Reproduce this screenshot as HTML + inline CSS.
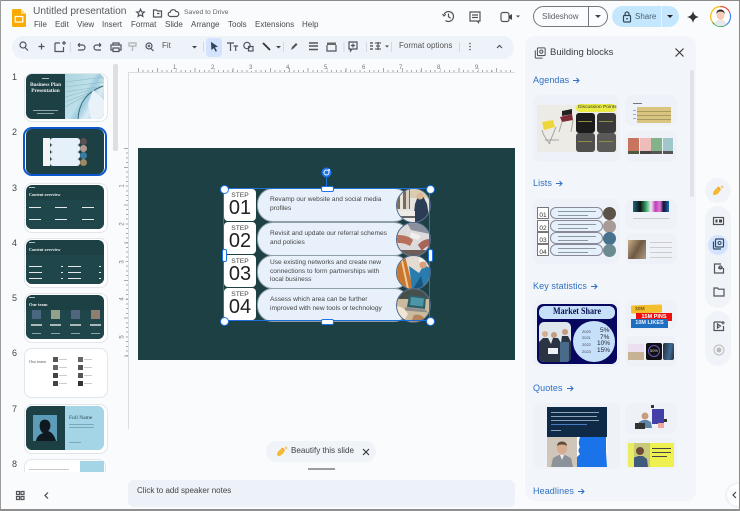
<!DOCTYPE html>
<html><head><meta charset="utf-8"><style>
html,body{margin:0;padding:0;background:#f9fbfd}
body{width:740px;height:511px;position:relative;overflow:hidden;background:#f9fbfd;font-family:"Liberation Sans","Noto Sans CJK SC",sans-serif;color:#444746;filter:blur(.3px)}
.a,.a *{box-sizing:border-box}
.a{position:absolute}
.t{position:absolute;white-space:nowrap;line-height:1}
svg{position:absolute;overflow:visible}
.i{fill:none;stroke:#50545a;stroke-width:1.2}
.card{position:absolute;left:24px;width:82px;background:#fff;border:1px solid #e1e5ec;border-radius:8px}
.img{position:absolute;left:26px;width:78px;border-radius:6px;overflow:hidden;background:#1c4043}
.n{position:absolute;left:12px;font-size:9px;color:#444746;line-height:1}
.w{position:absolute;background:#e5eaea;height:1px}
.tb{position:absolute;border-radius:8px;background:#eef2f8}
.h{position:absolute;left:533px;font-size:9px;letter-spacing:.1px;color:#2f6fc4;line-height:1;white-space:nowrap}
.h svg{position:relative;display:inline-block;margin-left:4px;top:0;vertical-align:-1px}
.step{position:absolute;left:224px;width:32px;height:32px;background:#fff;border-radius:4px;text-align:center;color:#222}
.step b{display:block;font-weight:400;font-size:6.700px;line-height:7px;margin-top:3px;color:#444}
.step i{display:block;font-style:normal;font-size:20px;line-height:19px}
.pill{position:absolute;left:257px;width:139px;height:32px;background:#e8f1fb;border-radius:16px;font-size:6.600px;line-height:8.800px;color:#444;padding-left:12px;display:flex;align-items:center;border:1px solid #8fa0a8}
.circ{position:absolute;left:396px;width:33px;height:33px;border-radius:50%;overflow:hidden;border:1px solid #4f6a8c}
.circ svg{left:0;top:0}
.hd{position:absolute;width:7px;height:7px;border-radius:50%;background:#fff;border:1px solid #1a73e8}
.hb{position:absolute;background:#fff;border:1px solid #1a73e8;border-radius:2px}
.mp{position:absolute;left:13px;top:0;width:53px;height:12px;border:.5px solid #889;border-radius:6px;background:linear-gradient(#8a96a0,#8a96a0) 7px 3px/38px 1px no-repeat,linear-gradient(#8a96a0,#8a96a0) 7px 7px/30px 1px no-repeat,#e6f0fb}
.mb{position:absolute;left:0;top:0;width:12px;height:12px;background:#fff;border:.5px solid #777;text-align:center;font-size:6.500px;line-height:15px;color:#333}
.mc{position:absolute;left:66px;top:0;width:13px;height:13px;border-radius:50%}
</style></head><body>

<!-- Top bar -->
<svg style="left:12px;top:9px" width="14" height="18" viewBox="0 0 14 18"><path d="M1.500 0H9l5 5v11.500a1.500 1.500 0 0 1-1.500 1.500h-11A1.500 1.500 0 0 1 0 16.500V1.500A1.500 1.500 0 0 1 1.500 0z" fill="#f9ab00"/><path d="M9 0l5 5H9z" fill="#fbd67a"/><rect x="3.200" y="7.500" width="7.600" height="5.500" fill="none" stroke="#fff" stroke-width="1.200"/></svg>
<div class="t" style="left:33px;top:7px;font-size:10.200px;color:#5a5d60">Untitled presentation</div>
<svg style="left:136px;top:7px" width="68" height="12" viewBox="0 0 68 12"><path class="i" d="M4.500 2.300l1.100 2.500 2.700.2-2 1.800.6 2.600-2.400-1.400-2.400 1.400.6-2.600-2-1.800 2.700-.2z"/><path class="i" d="M17.500 3h3l1 1h4v6h-8z"/><path class="i" d="M21 6.500h2.500M38 9.500h-3.500a2.200 2.200 0 0 1-.2-4.400 3 3 0 0 1 5.700-.6 2.500 2.500 0 0 1 .5 5z"/></svg>
<div class="t" style="left:184px;top:10px;font-size:6.800px;color:#666">Saved to Drive</div>
<div class="t" style="left:34px;top:21px;font-size:8px;color:#484b4e">File</div>
<div class="t" style="left:55px;top:21px;font-size:8px;color:#484b4e">Edit</div>
<div class="t" style="left:77px;top:21px;font-size:8px;color:#484b4e">View</div>
<div class="t" style="left:102px;top:21px;font-size:8px;color:#484b4e">Insert</div>
<div class="t" style="left:131px;top:21px;font-size:8px;color:#484b4e">Format</div>
<div class="t" style="left:165px;top:21px;font-size:8px;color:#484b4e">Slide</div>
<div class="t" style="left:191px;top:21px;font-size:8px;color:#484b4e">Arrange</div>
<div class="t" style="left:228px;top:21px;font-size:8px;color:#484b4e">Tools</div>
<div class="t" style="left:255px;top:21px;font-size:8px;color:#484b4e">Extensions</div>
<div class="t" style="left:302px;top:21px;font-size:8px;color:#484b4e">Help</div>

<!-- right top icons -->
<svg style="left:442px;top:9px" width="120" height="16" viewBox="0 0 120 16"><circle cx="6.500" cy="7.500" r="5" class="i" stroke-dasharray="24 8" transform="rotate(-150 6.500 7.500)"/><path class="i" d="M6.500 4.500v3.300l2.200 1.300M.5 5l1.500 2 1.700-1.700"/><path class="i" d="M28 3h10v9h-1.500v1.500L35 12h-7z"/><path class="i" d="M30 6h6M30 8.500h6"/><rect x="59" y="3.500" width="8" height="9" rx="2" class="i" stroke-width="1.500"/><path d="M67 7l3-2v6l-3-2z" fill="#444"/><path d="M74 6.500h4l-2 2z" fill="#444"/></svg>
<div class="a" style="left:533px;top:6px;width:75px;height:21px;border:1px solid #777;border-radius:11px;background:#fafcff"></div>
<div class="a" style="left:588px;top:6px;width:1px;height:21px;background:#777"></div>
<div class="t" style="left:542px;top:13px;font-size:8px;color:#5a5f62">Slideshow</div>
<svg style="left:595px;top:15px" width="6" height="4"><path d="M0 0h6L3 3z" fill="#444"/></svg>
<div class="a" style="left:612px;top:6px;width:67px;height:21px;border-radius:11px;background:#c5e7fd"></div>
<div class="a" style="left:661px;top:6px;width:1px;height:21px;background:#e5f3fd"></div>
<svg style="left:622px;top:11px" width="10" height="12" viewBox="0 0 10 12"><rect x="1.500" y="4.500" width="7" height="6.500" rx="1" fill="none" stroke="#33475b" stroke-width="1.200"/><path d="M3 4.500V3a2 2 0 0 1 4 0v1.500" fill="none" stroke="#33475b" stroke-width="1.200"/><circle cx="5" cy="7.800" r=".9" fill="#33475b"/></svg>
<div class="t" style="left:635px;top:13px;font-size:8px;color:#4a6275">Share</div>
<svg style="left:667px;top:15px" width="6" height="4"><path d="M0 0h6L3 3z" fill="#222"/></svg>
<svg style="left:686px;top:10px" width="14" height="14" viewBox="0 0 14 14"><path d="M7 1c.8 3.500 2 5 6 6-4 1-5.200 2.500-6 6-.8-3.500-2-5-6-6 4-1 5.200-2.500 6-6z" fill="#333"/></svg>
<svg style="left:709px;top:5px" width="23" height="23" viewBox="0 0 23 23"><circle cx="11.500" cy="11.500" r="10" fill="#fff"/><path d="M11.500 1.500a10 10 0 0 1 8.700 5" fill="none" stroke="#ea4335" stroke-width="1.200"/><path d="M20.200 6.500a10 10 0 0 1-3.700 13.700" fill="none" stroke="#4285f4" stroke-width="1.200"/><path d="M16.500 20.200a10 10 0 0 1-13-3" fill="none" stroke="#34a853" stroke-width="1.200"/><path d="M3.500 17.200a10 10 0 0 1 8-15.700" fill="none" stroke="#fbbc04" stroke-width="1.200"/><ellipse cx="11.500" cy="10" rx="4" ry="5" fill="#f3cdb8"/><path d="M7.300 9c0-6 8.400-6 8.400 0-1-2-2-2.500-4.200-2.500S8.300 7 7.300 9z" fill="#2a2320"/><path d="M5.500 19c1-3.500 3.500-4 6-4s5 .5 6 4a9 9 0 0 1-12 0z" fill="#e8e8ea"/></svg>

<!-- Toolbar -->
<div class="a" style="left:12px;top:36px;width:502px;height:23px;background:#eef2f9;border-radius:12px"></div>
<div class="a" style="left:206px;top:38px;width:16px;height:19px;background:#d3e3fd;border-radius:4px"></div>
<svg style="left:0;top:36px" width="520" height="23" viewBox="0 0 520 23">
<circle cx="23" cy="9" r="3" class="i"/><path class="i" d="M25 11.500l3 3"/>
<path class="i" stroke-width="1.300" d="M41.500 7.500v6M38.500 10.500h6"/>
<path class="i" d="M55 7h5M55 7v8.500h8.500V11M64 5v4M62 7h4"/>
<path d="M70.500 6v10" stroke="#d5dae1"/>
<path class="i" d="M78 9h4.500a2.500 2.500 0 0 1 0 5H78M78 9l1.800-1.800M78 9l1.800 1.800"/>
<path class="i" d="M101 9h-4.500a2.500 2.500 0 0 0 0 5H101M101 9l-1.800-1.800M101 9l-1.800 1.800"/>
<path class="i" d="M113 9h-2v5h2M119 9h2v5h-2M113 7h6v2h-6zM113 12h6v3.500h-6zM111 9h10"/>
<path d="M129 7h7v3h-7zM132.500 10v5" stroke="#b5bbc0" fill="none" stroke-width="1.400"/>
<circle cx="149" cy="10" r="3" class="i"/><path class="i" d="M151 12.500l2.500 2.500M147.700 10h2.600M149 8.700v2.600"/>
<path d="M192 10h5l-2.500 2.500z" fill="#444"/>
<path d="M203.500 6v10" stroke="#d5dae1"/>
<path d="M211 5.800l7 5-3 .6 2 3.600-1.300.7-2-3.600-2.300 2z" fill="#30425c"/>
<path class="i" d="M227 7h7M230.500 7v8M233.500 10h4.500M235.700 10v5"/>
<circle cx="247" cy="9.500" r="3.200" class="i"/><rect x="248.500" y="10.500" width="4.500" height="4.500" class="i"/>
<path d="M263 7l7 7" stroke="#333" stroke-width="1.800"/><path d="M276 10h5l-2.500 2.500z" fill="#444"/>
<path d="M283.500 6v10" stroke="#d5dae1"/>
<path d="M291 14l1-3 4-4 1.500 1.500-4 4z" fill="#555"/>
<path d="M309 7h9M309 10h9M309 13.500h9" stroke="#555" stroke-width="1.400"/>
<path d="M327 6.500h9v2.500h-9z" fill="#666"/><path class="i" d="M327 9v6h9V9" stroke-width=".8"/>
<path d="M344 6v10" stroke="#d5dae1"/>
<path class="i" d="M349 6h8v7h-5l-1.500 2v-2H349zM353 7.500v4M351 9.500h4"/>
<path d="M366.500 6v10" stroke="#d5dae1"/>
<path d="M370 7h3M370 10h3M370 13h3" stroke="#444" stroke-width="1.300"/><path d="M375 7h6M376 10h4M375 13h6M378 6v8" stroke="#444" stroke-width="1"/>
<path d="M385 9.500h4l-2 2z" fill="#444"/>
<path d="M391.500 6v10" stroke="#d5dae1"/>
<path d="M459.500 6v10" stroke="#d5dae1"/>
<circle cx="470" cy="7.500" r=".8" fill="#555"/><circle cx="470" cy="10.500" r=".8" fill="#555"/><circle cx="470" cy="13.500" r=".8" fill="#555"/>
<path class="i" d="M497 12l2.500-2.500 2.500 2.500"/>
</svg>
<div class="t" style="left:162px;top:42px;font-size:8px;color:#555">Fit</div>
<div class="t" style="left:399px;top:42px;font-size:8px;color:#555">Format options</div>

<!-- Left filmstrip -->
<div class="n" style="top:73px">1</div><div class="n" style="top:128px">2</div><div class="n" style="top:184px">3</div><div class="n" style="top:239px">4</div><div class="n" style="top:294px">5</div><div class="n" style="top:349px">6</div><div class="n" style="top:405px">7</div><div class="n" style="top:460px">8</div>
<div class="a" style="left:113px;top:64px;width:5px;height:87px;background:#dcdfe3;border-radius:2px"></div>

<div class="card" style="top:73px;height:47px"></div>
<div class="img" style="top:74px;height:45px">
  <div class="a" style="left:39px;top:0;width:39px;height:45px;background:linear-gradient(120deg,#a9d2de 0%,#bfe0ea 45%,#9ccbe0 55%,#dcecf4 70%,#8fc3e4 100%)"></div>
  <svg style="left:39px;top:0" width="39" height="45"><path d="M0 8L39 3M0 13L39 8M0 18L39 12M0 23L32 14M0 28L26 18M0 33L20 22" stroke="#8ab8c2" stroke-width=".6"/><path d="M13 45C14 28 22 18 38 12" stroke="#3c6a75" fill="none"/><path d="M26 45L23 30 28 16 39 26V45z" fill="#e8f2f8"/></svg>
  <div class="w" style="left:16px;top:4px;width:7px;background:#aebcbc"></div>
  <div class="t" style="left:0;width:39px;text-align:center;top:9px;font:700 5.300px/5.500px 'Liberation Serif',serif;color:#eee;white-space:normal">Business Plan Presentation</div>
  <div class="w" style="left:7px;top:36px;width:25px;background:#8fa5a5"></div><div class="w" style="left:11px;top:39px;width:17px;background:#8fa5a5"></div>
</div>

<div class="a" style="left:23px;top:127px;width:84px;height:49px;border:2px solid #0b57d0;border-radius:9px;background:#fff"></div>
<div class="img" style="top:129px;height:45px">
  <div class="a" style="left:17px;top:9px;width:7px;height:28px;background:#f4f4f4"></div>
  <div class="a" style="left:24px;top:9px;width:30px;height:7px;background:#e6f0fb;border-radius:3px"></div><div class="a" style="left:24px;top:16px;width:30px;height:7px;background:#e6f0fb;border-radius:3px"></div><div class="a" style="left:24px;top:23px;width:30px;height:7px;background:#e6f0fb;border-radius:3px"></div><div class="a" style="left:24px;top:30px;width:30px;height:7px;background:#e6f0fb;border-radius:3px"></div>
  <div class="a" style="left:54px;top:9px;width:7px;height:7px;border-radius:50%;background:#5d5050"></div><div class="a" style="left:54px;top:16px;width:7px;height:7px;border-radius:50%;background:#b39a92"></div><div class="a" style="left:54px;top:23px;width:7px;height:7px;border-radius:50%;background:#3b7ca3"></div><div class="a" style="left:54px;top:30px;width:7px;height:7px;border-radius:50%;background:#a08761"></div>
</div>

<div class="card" style="top:183px;height:48px"></div>
<div class="img" style="top:185px;height:44px">
  <div class="a" style="left:0;top:15px;width:78px;height:29px;background:#1f464a"></div>
  <div class="w" style="left:3px;top:2px;width:6px;background:#aebcbc"></div>
  <div class="t" style="left:3px;top:8px;font:700 4.200px/1 'Liberation Serif',serif;color:#eee">Content overview</div>
  <div class="w" style="left:3px;top:22px;width:12px"></div><div class="w" style="left:29px;top:22px;width:12px"></div><div class="w" style="left:56px;top:22px;width:12px"></div>
  <div class="w" style="left:3px;top:34px;width:12px"></div><div class="w" style="left:29px;top:34px;width:12px"></div><div class="w" style="left:56px;top:34px;width:12px"></div>
</div>

<div class="card" style="top:238px;height:48px"></div>
<div class="img" style="top:240px;height:44px">
  <div class="a" style="left:0;top:15px;width:78px;height:29px;background:#1f464a"></div>
  <div class="w" style="left:3px;top:2px;width:6px;background:#aebcbc"></div>
  <div class="t" style="left:3px;top:8px;font:700 4.200px/1 'Liberation Serif',serif;color:#eee">Content overview</div>
  <div class="w" style="left:3px;top:26px;width:13px"></div><div class="w" style="left:42px;top:26px;width:13px"></div><div class="w" style="left:35px;top:26px;width:2px"></div><div class="w" style="left:73px;top:26px;width:2px"></div>
  <div class="w" style="left:3px;top:32px;width:13px"></div><div class="w" style="left:42px;top:32px;width:13px"></div><div class="w" style="left:35px;top:32px;width:2px"></div><div class="w" style="left:73px;top:32px;width:2px"></div>
  <div class="w" style="left:3px;top:38px;width:13px"></div><div class="w" style="left:42px;top:38px;width:13px"></div><div class="w" style="left:35px;top:38px;width:2px"></div><div class="w" style="left:73px;top:38px;width:2px"></div>
</div>

<div class="card" style="top:293px;height:48px"></div>
<div class="img" style="top:295px;height:44px">
  <div class="a" style="left:0;top:15px;width:78px;height:29px;background:#1f464a"></div>
  <div class="w" style="left:3px;top:2px;width:6px;background:#aebcbc"></div>
  <div class="t" style="left:3px;top:8px;font:700 4.500px/1 'Liberation Serif',serif;color:#eee">Our team</div>
  <div class="a" style="left:6px;top:15px;width:9px;height:9px;background:#4b6680"></div><div class="a" style="left:25px;top:15px;width:9px;height:9px;background:#93a08a"></div><div class="a" style="left:45px;top:15px;width:9px;height:9px;background:#52657f"></div><div class="a" style="left:65px;top:15px;width:9px;height:9px;background:#8f7d70"></div>
  <div class="w" style="left:5px;top:29px;width:11px;height:2px;background:#aab8b8"></div><div class="w" style="left:24px;top:29px;width:11px;height:2px;background:#aab8b8"></div><div class="w" style="left:44px;top:29px;width:11px;height:2px;background:#aab8b8"></div><div class="w" style="left:64px;top:29px;width:11px;height:2px;background:#aab8b8"></div>
  <div class="w" style="left:6px;top:38px;width:9px;background:#8fa5a5"></div><div class="w" style="left:25px;top:38px;width:9px;background:#8fa5a5"></div><div class="w" style="left:45px;top:38px;width:9px;background:#8fa5a5"></div><div class="w" style="left:65px;top:38px;width:9px;background:#8fa5a5"></div>
</div>

<div class="card" style="top:348px;height:48px"></div>
<div class="img" style="top:350px;height:44px;background:#fff">
  <div class="t" style="left:3px;top:10px;font:4.500px/1 'Liberation Serif',serif;color:#555">Our team</div>
  <div class="a" style="left:27px;top:7px;width:5px;height:5px;background:#555"></div><div class="a" style="left:27px;top:15px;width:5px;height:5px;background:#666"></div><div class="a" style="left:27px;top:23px;width:5px;height:5px;background:#444"></div><div class="a" style="left:27px;top:31px;width:5px;height:5px;background:#444"></div>
  <div class="a" style="left:52px;top:7px;width:5px;height:5px;background:#666"></div><div class="a" style="left:52px;top:15px;width:5px;height:5px;background:#555"></div><div class="a" style="left:52px;top:23px;width:5px;height:5px;background:#555"></div><div class="a" style="left:52px;top:31px;width:5px;height:5px;background:#333"></div>
  <div class="w" style="left:33px;top:9px;width:8px;background:#ccc"></div><div class="w" style="left:33px;top:17px;width:8px;background:#ccc"></div><div class="w" style="left:33px;top:25px;width:8px;background:#ccc"></div><div class="w" style="left:33px;top:33px;width:8px;background:#ccc"></div>
  <div class="w" style="left:58px;top:9px;width:8px;background:#ccc"></div><div class="w" style="left:58px;top:17px;width:8px;background:#ccc"></div><div class="w" style="left:58px;top:25px;width:8px;background:#ccc"></div><div class="w" style="left:58px;top:33px;width:8px;background:#ccc"></div>
</div>

<div class="card" style="top:404px;height:48px"></div>
<div class="img" style="top:406px;height:44px;background:#a3d5e6">
  <div class="a" style="left:0;top:0;width:39px;height:44px;background:#1c4043"></div>
  <div class="a" style="left:7px;top:9px;width:24px;height:26px;background:#5c9cb8"></div>
  <svg style="left:7px;top:9px" width="24" height="26"><path d="M3 26c1-6 5-7 7-8-3-2-4-6-3-10 1-4 8-5 10 0 1 3 0 7-2 8 3 1 6 3 8 10z" fill="#101820"/></svg>
  <div class="t" style="left:43px;top:10px;font:5.500px/1 'Liberation Serif',serif;color:#2b4a55">Full Name</div>
  <div class="w" style="left:43px;top:18px;width:25px;background:#7ba8b8"></div><div class="w" style="left:43px;top:21px;width:25px;background:#7ba8b8"></div><div class="w" style="left:43px;top:36px;width:12px;background:#7ba8b8"></div>
</div>

<div class="a" style="left:24px;top:459px;width:82px;height:13px;background:#fff;border:1px solid #e1e5ec;border-bottom:none;border-radius:8px 8px 0 0"></div>
<div class="a" style="left:80px;top:461px;width:24px;height:11px;background:#a3d5e6"></div>
<div class="w" style="left:29px;top:469px;width:40px;background:#ccc"></div>

<svg style="left:16px;top:491px" width="34" height="10" viewBox="0 0 34 10"><path class="i" d="M.5.500h3v3h-3zM5 .5h3v3H5zM.5 5.500h3v3h-3zM5 5.500h3v3H5z"/><path d="M32 1.500l-3 3 3 3" fill="none" stroke="#444" stroke-width="1.200"/></svg>

<!-- Rulers and canvas -->
<div class="a" style="left:128px;top:72px;width:387px;height:1px;background:#dadde1"></div>
<div class="a" style="left:128px;top:72px;width:1px;height:357px;background:#dadde1"></div>
<div class="a" style="left:138px;top:70px;width:377px;height:2px;background:repeating-linear-gradient(90deg,#a5aaaf 0,#a5aaaf 1px,transparent 1px,transparent 4.710px)"></div>
<div class="a" style="left:138px;top:68px;width:377px;height:4px;background:repeating-linear-gradient(90deg,#a5aaaf 0,#a5aaaf 1px,transparent 1px,transparent 18.850px)"></div>
<div class="a" style="left:126px;top:148px;width:2px;height:212px;background:repeating-linear-gradient(180deg,#a5aaaf 0,#a5aaaf 1px,transparent 1px,transparent 4.710px)"></div>
<div class="a" style="left:124px;top:148px;width:4px;height:212px;background:repeating-linear-gradient(180deg,#a5aaaf 0,#a5aaaf 1px,transparent 1px,transparent 18.850px)"></div>
<div class="t" style="left:173px;top:65px;font-size:6px;color:#777;background:#f9fbfd">1</div><div class="t" style="left:211px;top:65px;font-size:6px;color:#777;background:#f9fbfd">2</div><div class="t" style="left:249px;top:65px;font-size:6px;color:#777;background:#f9fbfd">3</div><div class="t" style="left:286px;top:65px;font-size:6px;color:#777;background:#f9fbfd">4</div><div class="t" style="left:324px;top:65px;font-size:6px;color:#777;background:#f9fbfd">5</div><div class="t" style="left:362px;top:65px;font-size:6px;color:#777;background:#f9fbfd">6</div><div class="t" style="left:399px;top:65px;font-size:6px;color:#777;background:#f9fbfd">7</div><div class="t" style="left:437px;top:65px;font-size:6px;color:#777;background:#f9fbfd">8</div><div class="t" style="left:475px;top:65px;font-size:6px;color:#777;background:#f9fbfd">9</div>
<div class="t" style="left:121px;top:183px;font-size:6px;color:#777;background:#f9fbfd;transform:rotate(-90deg)">1</div><div class="t" style="left:121px;top:221px;font-size:6px;color:#777;background:#f9fbfd;transform:rotate(-90deg)">2</div><div class="t" style="left:121px;top:259px;font-size:6px;color:#777;background:#f9fbfd;transform:rotate(-90deg)">3</div><div class="t" style="left:121px;top:296px;font-size:6px;color:#777;background:#f9fbfd;transform:rotate(-90deg)">4</div><div class="t" style="left:121px;top:334px;font-size:6px;color:#777;background:#f9fbfd;transform:rotate(-90deg)">5</div>

<div class="a" style="left:138px;top:148px;width:377px;height:212px;background:#1c4043"></div>

<div class="step" style="top:189px"><b>STEP</b><i>01</i></div>
<div class="step" style="top:222px"><b>STEP</b><i>02</i></div>
<div class="step" style="top:255px"><b>STEP</b><i>03</i></div>
<div class="step" style="top:288px"><b>STEP</b><i>04</i></div>
<div class="pill" style="top:188px"><span>Revamp our website and social media<br>profiles</span></div>
<div class="pill" style="top:222px"><span>Revisit and update our referral schemes<br>and policies</span></div>
<div class="pill" style="top:255px"><span>Use existing networks and create new<br>connections to form partnerships with<br>local business</span></div>
<div class="pill" style="top:288px"><span>Assess which area can be further<br>improved with new tools or technology</span></div>

<div class="circ" style="top:188px;background:#e6e4df"><svg width="33" height="33"><rect width="13" height="20" fill="#7a6a5a"/><rect x="3" width="3" height="20" fill="#e8e4da"/><rect x="9" width="3" height="20" fill="#d8d2c6"/><rect x="13" width="20" height="9" fill="#d9cdb0"/><path d="M16 33l2-18 3-8h5l4 8 3 18z" fill="#2b3d55"/><circle cx="23" cy="7" r="3.500" fill="#dcb89a"/><rect y="22" width="18" height="11" fill="#efece8"/><path d="M0 28h18" stroke="#666" stroke-width="2"/></svg></div>
<div class="circ" style="top:222px;background:#dcdadb"><svg width="33" height="33"><path d="M10 0h23v11L14 7z" fill="#8a909c"/><path d="M0 12c6 0 12 1 16 5l-3 6C8 20 4 20 0 20z" fill="#b7705c"/><path d="M33 16c-5 0-9 2-12 6l4 6c2-3 5-5 8-5z" fill="#a6675a"/><path d="M0 27h33v6H0z" fill="#6d5d58"/><path d="M14 9l10 4-3 4-8-3z" fill="#f2f0ee"/></svg></div>
<div class="circ" style="top:255px;background:#e4dcd0"><svg width="33" height="33"><path d="M0 0h8l8 33H0z" fill="#c9772f"/><path d="M3 0h2l7 33h-2z" fill="#f0c89a"/><path d="M12 10l10 7 5-8 6 3v12l-8 9H15z" fill="#2a7cae"/><circle cx="26" cy="9" r="3.500" fill="#d7a27a"/><path d="M22 0h11v5l-11 1z" fill="#f4f2ee"/><path d="M16 33l8-13 3 13z" fill="#17567f"/></svg></div>
<div class="circ" style="top:288px;background:#cdbb9d"><svg width="33" height="33"><rect width="33" height="10" fill="#45504c"/><path d="M12 6l17 2-1 12-18-2z" fill="#2f5f68"/><path d="M14 8l13 1.500-1 8-13-1.500z" fill="#4b97a6"/><path d="M8 18l20 2.500 3 3-23-2z" fill="#8d8d8d"/><path d="M0 17c5 1 8 3 11 8l-5 8H0z" fill="#efe6d6"/><path d="M17 26c4-1 8 0 10 3l-2 4H14z" fill="#b5835d"/></svg></div>

<div class="a" style="left:223px;top:188px;width:207px;height:133px;border:1.200px solid #1f6fd8"></div>
<div class="a" style="left:326px;top:176px;width:1px;height:12px;background:#1a73e8"></div>
<div class="hd" style="left:220px;top:185px"></div><div class="hd" style="left:426px;top:185px"></div><div class="hd" style="left:220px;top:317px"></div><div class="hd" style="left:426px;top:317px"></div>
<div class="hb" style="left:321px;top:186px;width:11px;height:4px"></div><div class="hb" style="left:321px;top:319px;width:11px;height:4px"></div>
<div class="hb" style="left:222px;top:249px;width:3px;height:11px"></div><div class="hb" style="left:428px;top:249px;width:3px;height:11px"></div>
<svg style="left:321px;top:167px" width="11" height="11" viewBox="0 0 11 11"><circle cx="5.500" cy="5.500" r="5" fill="#1a73e8"/><circle cx="5.500" cy="5.500" r="2.500" fill="none" stroke="#fff"/><path d="M7 2.500h1.500V4.300" stroke="#fff" fill="none" stroke-width=".8"/></svg>

<!-- Beautify & notes -->
<div class="a" style="left:266px;top:441px;width:110px;height:21px;background:#f0f4f9;border-radius:11px"></div>
<svg style="left:276px;top:445px" width="13" height="13" viewBox="0 0 13 13"><path d="M1 10c0-3 2.500-5 4-6l3 3c-1 2-4 4.500-6 4z" fill="#f5b92e"/><path d="M5 3.500l1.500-1 2.500 3-1 1.200z" fill="#ef9c1d"/><path d="M10 1l.5 1.500L12 3l-1.500.5L10 5l-.5-1.500L8 3l1.500-.5z" fill="#f5b92e"/></svg>
<div class="t" style="left:291px;top:447px;font-size:8.100px;color:#3f4347">Beautify this slide</div>
<svg style="left:362px;top:448px" width="8" height="8"><path d="M1 1l6 6M7 1L1 7" stroke="#333" stroke-width="1.100"/></svg>
<div class="a" style="left:308px;top:468px;width:27px;height:2px;background:#9a9ea3"></div>
<div class="a" style="left:128px;top:480px;width:387px;height:27px;background:#edf1f8;border-radius:6px"></div>
<div class="t" style="left:137px;top:487px;font-size:8px;color:#444">Click to add speaker notes</div>

<!-- Building blocks -->
<div class="a" style="left:525px;top:36px;width:171px;height:465px;background:#f2f5fa;border-radius:10px"></div>
<svg style="left:534px;top:47px" width="12" height="12" viewBox="0 0 14 14"><rect x="4" y="1" width="9" height="9" rx="1" class="i"/><circle cx="8.500" cy="5.500" r="1.800" class="i"/><path class="i" d="M1.500 4v8a1 1 0 0 0 1 1H10"/></svg>
<div class="t" style="left:550px;top:48px;font-size:9.500px;color:#3c4043">Building blocks</div>
<svg style="left:675px;top:48px" width="9" height="9"><path d="M.5.500l8 8M8.500.5l-8 8" stroke="#333" stroke-width="1.100"/></svg>
<div class="a" style="left:690px;top:70px;width:4px;height:127px;background:#dfe2e6;border-radius:2px"></div>

<div class="h" style="top:76px">Agendas<svg width="7" height="7" viewBox="0 0 7 7"><path d="M0 3.500h6M3.500 1l2.500 2.500L3.500 6" fill="none" stroke="#2f6fc4" stroke-width="1"/></svg></div>
<div class="tb" style="left:533px;top:95px;width:87px;height:67px"></div>
<div class="tb" style="left:625px;top:95px;width:52px;height:31px"></div>
<div class="tb" style="left:625px;top:131px;width:52px;height:31px"></div>
<div class="a" style="left:537px;top:105px;width:80px;height:47px;background:#ecebe6"></div>
<svg style="left:537px;top:108px" width="40" height="44"><path d="M5 14l11-2 2 7-11 3z" fill="#ecd63a"/><path d="M23 9l12-3 1 6-11 2z" fill="#7e2c36"/><path d="M25 3l10-2 0 5-10 2z" fill="#222"/><path d="M5 22c2 8 6 11 8 14M19 19l-7 17M25 14l-3 10M36 12l-2 12M8 32h14" stroke="#a5a5a5" fill="none"/></svg>
<div class="a" style="left:576px;top:104px;width:40px;height:8px;background:#e9ec47;border-radius:4px"></div>
<div class="t" style="left:578px;top:105.500px;font-size:4.900px;color:#333">Discussion Points</div>
<div class="a" style="left:576px;top:113px;width:19px;height:20px;background:#1c1c1c;border-radius:3px"></div>
<div class="a" style="left:597px;top:113px;width:19px;height:20px;background:#3a3a3a;border-radius:3px"></div>
<div class="a" style="left:576px;top:133px;width:19px;height:19px;background:#4f4f4d;border-radius:3px"></div>
<div class="a" style="left:597px;top:133px;width:19px;height:19px;background:#5a5a58;border-radius:3px"></div>
<div class="w" style="left:578px;top:121px;width:14px;background:#8f8d42"></div><div class="w" style="left:599px;top:121px;width:14px;background:#8f8d42"></div><div class="w" style="left:578px;top:141px;width:14px;background:#8f8d42"></div><div class="w" style="left:599px;top:141px;width:14px;background:#8f8d42"></div>
<div class="a" style="left:637px;top:107px;width:34px;height:16px;background:#d9c57f"></div>
<div class="w" style="left:637px;top:111px;width:34px;background:#a89a60"></div><div class="w" style="left:637px;top:115px;width:34px;background:#a89a60"></div><div class="w" style="left:637px;top:119px;width:34px;background:#a89a60"></div>
<div class="w" style="left:633px;top:103px;width:9px;background:#777"></div>
<div class="w" style="left:633px;top:110px;width:3px;background:#aaa"></div><div class="w" style="left:633px;top:114px;width:3px;background:#aaa"></div><div class="w" style="left:633px;top:118px;width:3px;background:#aaa"></div>
<div class="a" style="left:628px;top:138px;width:11px;height:16px;background:linear-gradient(#c9745e 80%,#4d5a40 80%)"></div><div class="a" style="left:640px;top:138px;width:11px;height:16px;background:linear-gradient(#efbcbc 80%,#444 80%)"></div><div class="a" style="left:651px;top:138px;width:11px;height:16px;background:linear-gradient(#82b38a 80%,#555 80%)"></div><div class="a" style="left:663px;top:138px;width:10px;height:16px;background:linear-gradient(#9fc7cc 80%,#555 80%)"></div>

<div class="h" style="top:179px">Lists<svg width="7" height="7" viewBox="0 0 7 7"><path d="M0 3.500h6M3.500 1l2.500 2.500L3.500 6" fill="none" stroke="#2f6fc4" stroke-width="1"/></svg></div>
<div class="tb" style="left:533px;top:199px;width:87px;height:65px"></div>
<div class="tb" style="left:625px;top:199px;width:52px;height:30px"></div>
<div class="tb" style="left:625px;top:233px;width:52px;height:31px"></div>
<div class="a" style="left:537px;top:207px;width:80px;height:13px"><div class="mb">01</div><div class="mp"></div><div class="mc" style="background:#5a5148"></div></div>
<div class="a" style="left:537px;top:220px;width:80px;height:13px"><div class="mb">02</div><div class="mp"></div><div class="mc" style="background:#a89a96"></div></div>
<div class="a" style="left:537px;top:232px;width:80px;height:13px"><div class="mb">03</div><div class="mp"></div><div class="mc" style="background:#47718c"></div></div>
<div class="a" style="left:537px;top:244px;width:80px;height:13px"><div class="mb">04</div><div class="mp"></div><div class="mc" style="background:#6b8a92"></div></div>
<div class="a" style="left:633px;top:201px;width:36px;height:11px;background:linear-gradient(90deg,#1a6a80 0%,#111 20%,#2aa063 35%,#eee 50%,#c03ec0 62%,#e07ad0 75%,#113 85%,#1a70b0 100%)"></div>
<div class="w" style="left:633px;top:218px;width:36px;background:#ccc"></div>
<div class="a" style="left:628px;top:240px;width:18px;height:19px;background:linear-gradient(120deg,#c9b08a,#6e5a44,#b09a80)"></div>
<div class="w" style="left:650px;top:242px;width:22px;background:#ccc"></div><div class="w" style="left:650px;top:247px;width:22px;background:#ccc"></div><div class="w" style="left:650px;top:252px;width:22px;background:#ccc"></div><div class="w" style="left:650px;top:257px;width:22px;background:#ccc"></div>

<div class="h" style="top:282px">Key statistics<svg width="7" height="7" viewBox="0 0 7 7"><path d="M0 3.500h6M3.500 1l2.500 2.500L3.500 6" fill="none" stroke="#2f6fc4" stroke-width="1"/></svg></div>
<div class="tb" style="left:533px;top:300px;width:87px;height:67px"></div>
<div class="tb" style="left:625px;top:300px;width:52px;height:30px"></div>
<div class="tb" style="left:625px;top:336px;width:52px;height:31px"></div>
<div class="a" style="left:537px;top:304px;width:80px;height:60px;background:#07075f;border-radius:6px"></div>
<div class="a" style="left:539px;top:306px;width:76px;height:13px;background:#c6e0fa;border-radius:6px"></div>
<div class="t" style="left:539px;width:76px;top:308px;text-align:center;font:700 9.500px/1 'Liberation Serif',serif;color:#0a1050;transform:scaleX(.85)">Market Share</div>
<div class="a" style="left:539px;top:322px;width:32px;height:40px;background:#dfe6ec;border-radius:5px;overflow:hidden"><svg width="32" height="40"><path d="M0 40V20l4-4h5l3 6 2-6h5l3 5 1-7h6l3 6v20z" fill="#2a3442"/><circle cx="6" cy="12" r="3" fill="#d3ad92"/><circle cx="15" cy="13" r="3" fill="#c49c80"/><circle cx="26" cy="10" r="3" fill="#c49c80"/><path d="M21 40V20h9v20z" fill="#4a6a8a"/><path d="M9 26h10v6H9z" fill="#eef2f6"/></svg></div>
<div class="a" style="left:573px;top:321px;width:42px;height:41px;background:#c6e0fa;border-radius:50%"></div>
<div class="t" style="left:582px;top:330px;font-size:4px;color:#445">2020</div><div class="t" style="left:600px;top:328px;font-size:6.500px;color:#223">5%</div>
<div class="t" style="left:582px;top:336px;font-size:4px;color:#445">2021</div><div class="t" style="left:600px;top:334.500px;font-size:6.500px;color:#223">7%</div>
<div class="t" style="left:582px;top:343px;font-size:4px;color:#445">2022</div><div class="t" style="left:597px;top:341px;font-size:6.500px;color:#223">10%</div>
<div class="t" style="left:582px;top:350px;font-size:4px;color:#445">2023</div><div class="t" style="left:597px;top:348px;font-size:6.500px;color:#223">15%</div>
<div class="a" style="left:631px;top:305px;width:31px;height:8px;background:#f4bf2d;transform:rotate(-2deg);border-radius:1px;font:700 5px/8px 'Liberation Sans',sans-serif;color:#7a5a10;padding-left:4px">30M</div>
<div class="a" style="left:636px;top:313px;width:36px;height:8px;background:#f00f0f;text-align:center;font:700 5.500px/8px 'Liberation Sans',sans-serif;color:#fff">15M PINS</div>
<div class="a" style="left:631px;top:319px;width:37px;height:9px;background:#1f6fc0;text-align:center;font:700 5.500px/9px 'Liberation Sans',sans-serif;color:#e8f0fa">10M LIKES</div>
<div class="a" style="left:628px;top:344px;width:16px;height:8px;background:#ebdff0"></div>
<div class="a" style="left:628px;top:352px;width:16px;height:8px;background:#c7b393"></div>
<div class="a" style="left:646px;top:343px;width:16px;height:17px;background:#111;border-radius:2px"></div>
<div class="a" style="left:648px;top:345px;width:12px;height:12px;border:1px solid #6a58c8;border-radius:50%;color:#ddd;font-size:4px;line-height:10px;text-align:center">50%</div>
<div class="a" style="left:663px;top:343px;width:11px;height:17px;background:linear-gradient(100deg,#2a2a30,#3d6a96 60%,#2a2a30);border-radius:2px"></div>

<div class="h" style="top:384px">Quotes<svg width="7" height="7" viewBox="0 0 7 7"><path d="M0 3.500h6M3.500 1l2.500 2.500L3.500 6" fill="none" stroke="#2f6fc4" stroke-width="1"/></svg></div>
<div class="tb" style="left:533px;top:403px;width:87px;height:66px"></div>
<div class="tb" style="left:625px;top:403px;width:52px;height:31px"></div>
<div class="tb" style="left:625px;top:438px;width:52px;height:31px"></div>
<div class="a" style="left:547px;top:407px;width:60px;height:30px;background:#0e2a47"></div>
<div class="w" style="left:551px;top:412px;width:48px;background:#8fa2b6"></div><div class="w" style="left:551px;top:416px;width:46px;background:#8fa2b6"></div><div class="w" style="left:551px;top:420px;width:48px;background:#8fa2b6"></div><div class="w" style="left:551px;top:424px;width:36px;background:#4a7bc0"></div><div class="w" style="left:551px;top:430px;width:10px;background:#8ea0b5"></div>
<div class="a" style="left:547px;top:437px;width:30px;height:30px;background:#cfc5b8;overflow:hidden"><svg width="30" height="30"><path d="M4 30l2-9 6-3h6l6 3 2 9z" fill="#8b929a"/><path d="M13 18l2 5 2-5z" fill="#f0eeea"/><ellipse cx="15" cy="11" rx="5" ry="6" fill="#d7ab90"/><path d="M10 9c0-6 10-6 10 0-2-2-8-2-10 0z" fill="#5c4a3a"/></svg></div>
<div class="a" style="left:577px;top:437px;width:30px;height:30px;background:#fff"></div>
<svg style="left:577px;top:437px" width="30" height="30"><path d="M3 0h26v15l1 15H0V20l3-3c-2-2-2-5 0-7-2-3-1-7 0-10z" fill="#1a73e8"/></svg>
<div class="a" style="left:652px;top:409px;width:12px;height:15px;background:#4340a8"></div>
<div class="a" style="left:658px;top:423px;width:6px;height:5px;background:#eda79b"></div>
<svg style="left:638px;top:411px" width="14" height="17"><path d="M0 17l1-6 4-2h4l4 2 1 6z" fill="#5f84a8"/><circle cx="7" cy="5" r="3.500" fill="#c79d82"/></svg>
<div class="a" style="left:635px;top:423px;width:10px;height:6px;background:#333"></div>
<div class="a" style="left:651px;top:405px;width:3px;height:3px;background:#333"></div>
<div class="a" style="left:664px;top:419px;width:3px;height:3px;background:#333"></div>
<div class="a" style="left:628px;top:443px;width:46px;height:24px;background:#edf04e"></div>
<div class="a" style="left:628px;top:443px;width:22px;height:24px;background:#c9c97a;overflow:hidden"><svg width="22" height="24"><path d="M3 24l2-9 5-2h5l4 3 1 8z" fill="#3f5a7a"/><circle cx="12" cy="8" r="4" fill="#6d4b38"/><path d="M0 0h6v24H0z" fill="#e8ec60"/></svg></div>
<div class="w" style="left:652px;top:448px;width:19px;background:#444"></div><div class="w" style="left:652px;top:452px;width:19px;background:#444"></div><div class="w" style="left:652px;top:456px;width:15px;background:#444"></div>

<div class="h" style="top:487px">Headlines<svg width="7" height="7" viewBox="0 0 7 7"><path d="M0 3.500h6M3.500 1l2.500 2.500L3.500 6" fill="none" stroke="#2f6fc4" stroke-width="1"/></svg></div>

<!-- Right rail -->
<div class="a" style="left:705px;top:178px;width:26px;height:25px;background:#f0f4f9;border-radius:13px"></div>
<div class="a" style="left:705px;top:206px;width:26px;height:102px;background:#f0f4f9;border-radius:13px"></div>
<div class="a" style="left:705px;top:311px;width:26px;height:55px;background:#f0f4f9;border-radius:13px"></div>
<div class="a" style="left:708px;top:235px;width:20px;height:20px;background:#d3e3fd;border-radius:50%"></div>
<svg style="left:712px;top:184px" width="13" height="13" viewBox="0 0 13 13"><path d="M1 10c0-3 2.500-5 4-6l3 3c-1 2-4 4.500-6 4z" fill="#f5b92e"/><path d="M5 3.500l1.500-1 2.500 3-1 1.200z" fill="#ef9c1d"/><path d="M10 1l.5 1.500L12 3l-1.500.5L10 5l-.5-1.500L8 3l1.500-.5z" fill="#f5b92e"/></svg>
<svg style="left:712px;top:215px" width="14" height="140" viewBox="0 0 14 140"><rect x="1.500" y="2.500" width="10" height="7" class="i"/><rect x="3.500" y="4.500" width="2" height="3" fill="#444"/><rect x="7" y="4.500" width="3" height="3" fill="#444"/>
<rect x="3.500" y="24" width="8" height="8" rx="1" stroke="#2f4a6a" fill="none" stroke-width="1.200"/><circle cx="7.500" cy="28" r="1.500" stroke="#2f4a6a" fill="none"/><path d="M1.500 26.500V33a1 1 0 0 0 1 1H9" stroke="#2f4a6a" fill="none" stroke-width="1.200"/>
<path class="i" d="M9 49H2.500v9h9v-5M8.500 51a1.500 1.500 0 1 0 .01 0M6 53h5"/>
<path class="i" d="M2 73h3.500l1 1.200H12v6.800H2z"/>
<path class="i" d="M2 107h7v-.5M2 107v8.500h9.500V111M5.500 109l3 2-3 2zM11 106v3.500M9.200 107.800h3.500"/>
<circle cx="7" cy="135" r="5" stroke="#bbb" fill="none"/><circle cx="7" cy="135" r="2.500" fill="#bbb"/></svg>
<div class="a" style="left:727px;top:484px;width:20px;height:22px;background:#fff;border-radius:11px 0 0 11px;box-shadow:0 0 3px #d5d9df"></div>
<svg style="left:732px;top:491px" width="6" height="8"><path d="M4 1L1 4l3 3" stroke="#444" fill="none" stroke-width="1.200"/></svg>

<!-- Window frame -->
<div class="a" style="left:0;top:0;width:740px;height:1px;background:#8a8a8a"></div>
<div class="a" style="left:0;top:0;width:1px;height:511px;background:#9a9a9a"></div>
<div class="a" style="left:739px;top:0;width:1px;height:511px;background:#8a8a8a"></div>
<div class="a" style="left:0;top:509px;width:740px;height:2px;background:#8f8f8f"></div>
</body></html>
